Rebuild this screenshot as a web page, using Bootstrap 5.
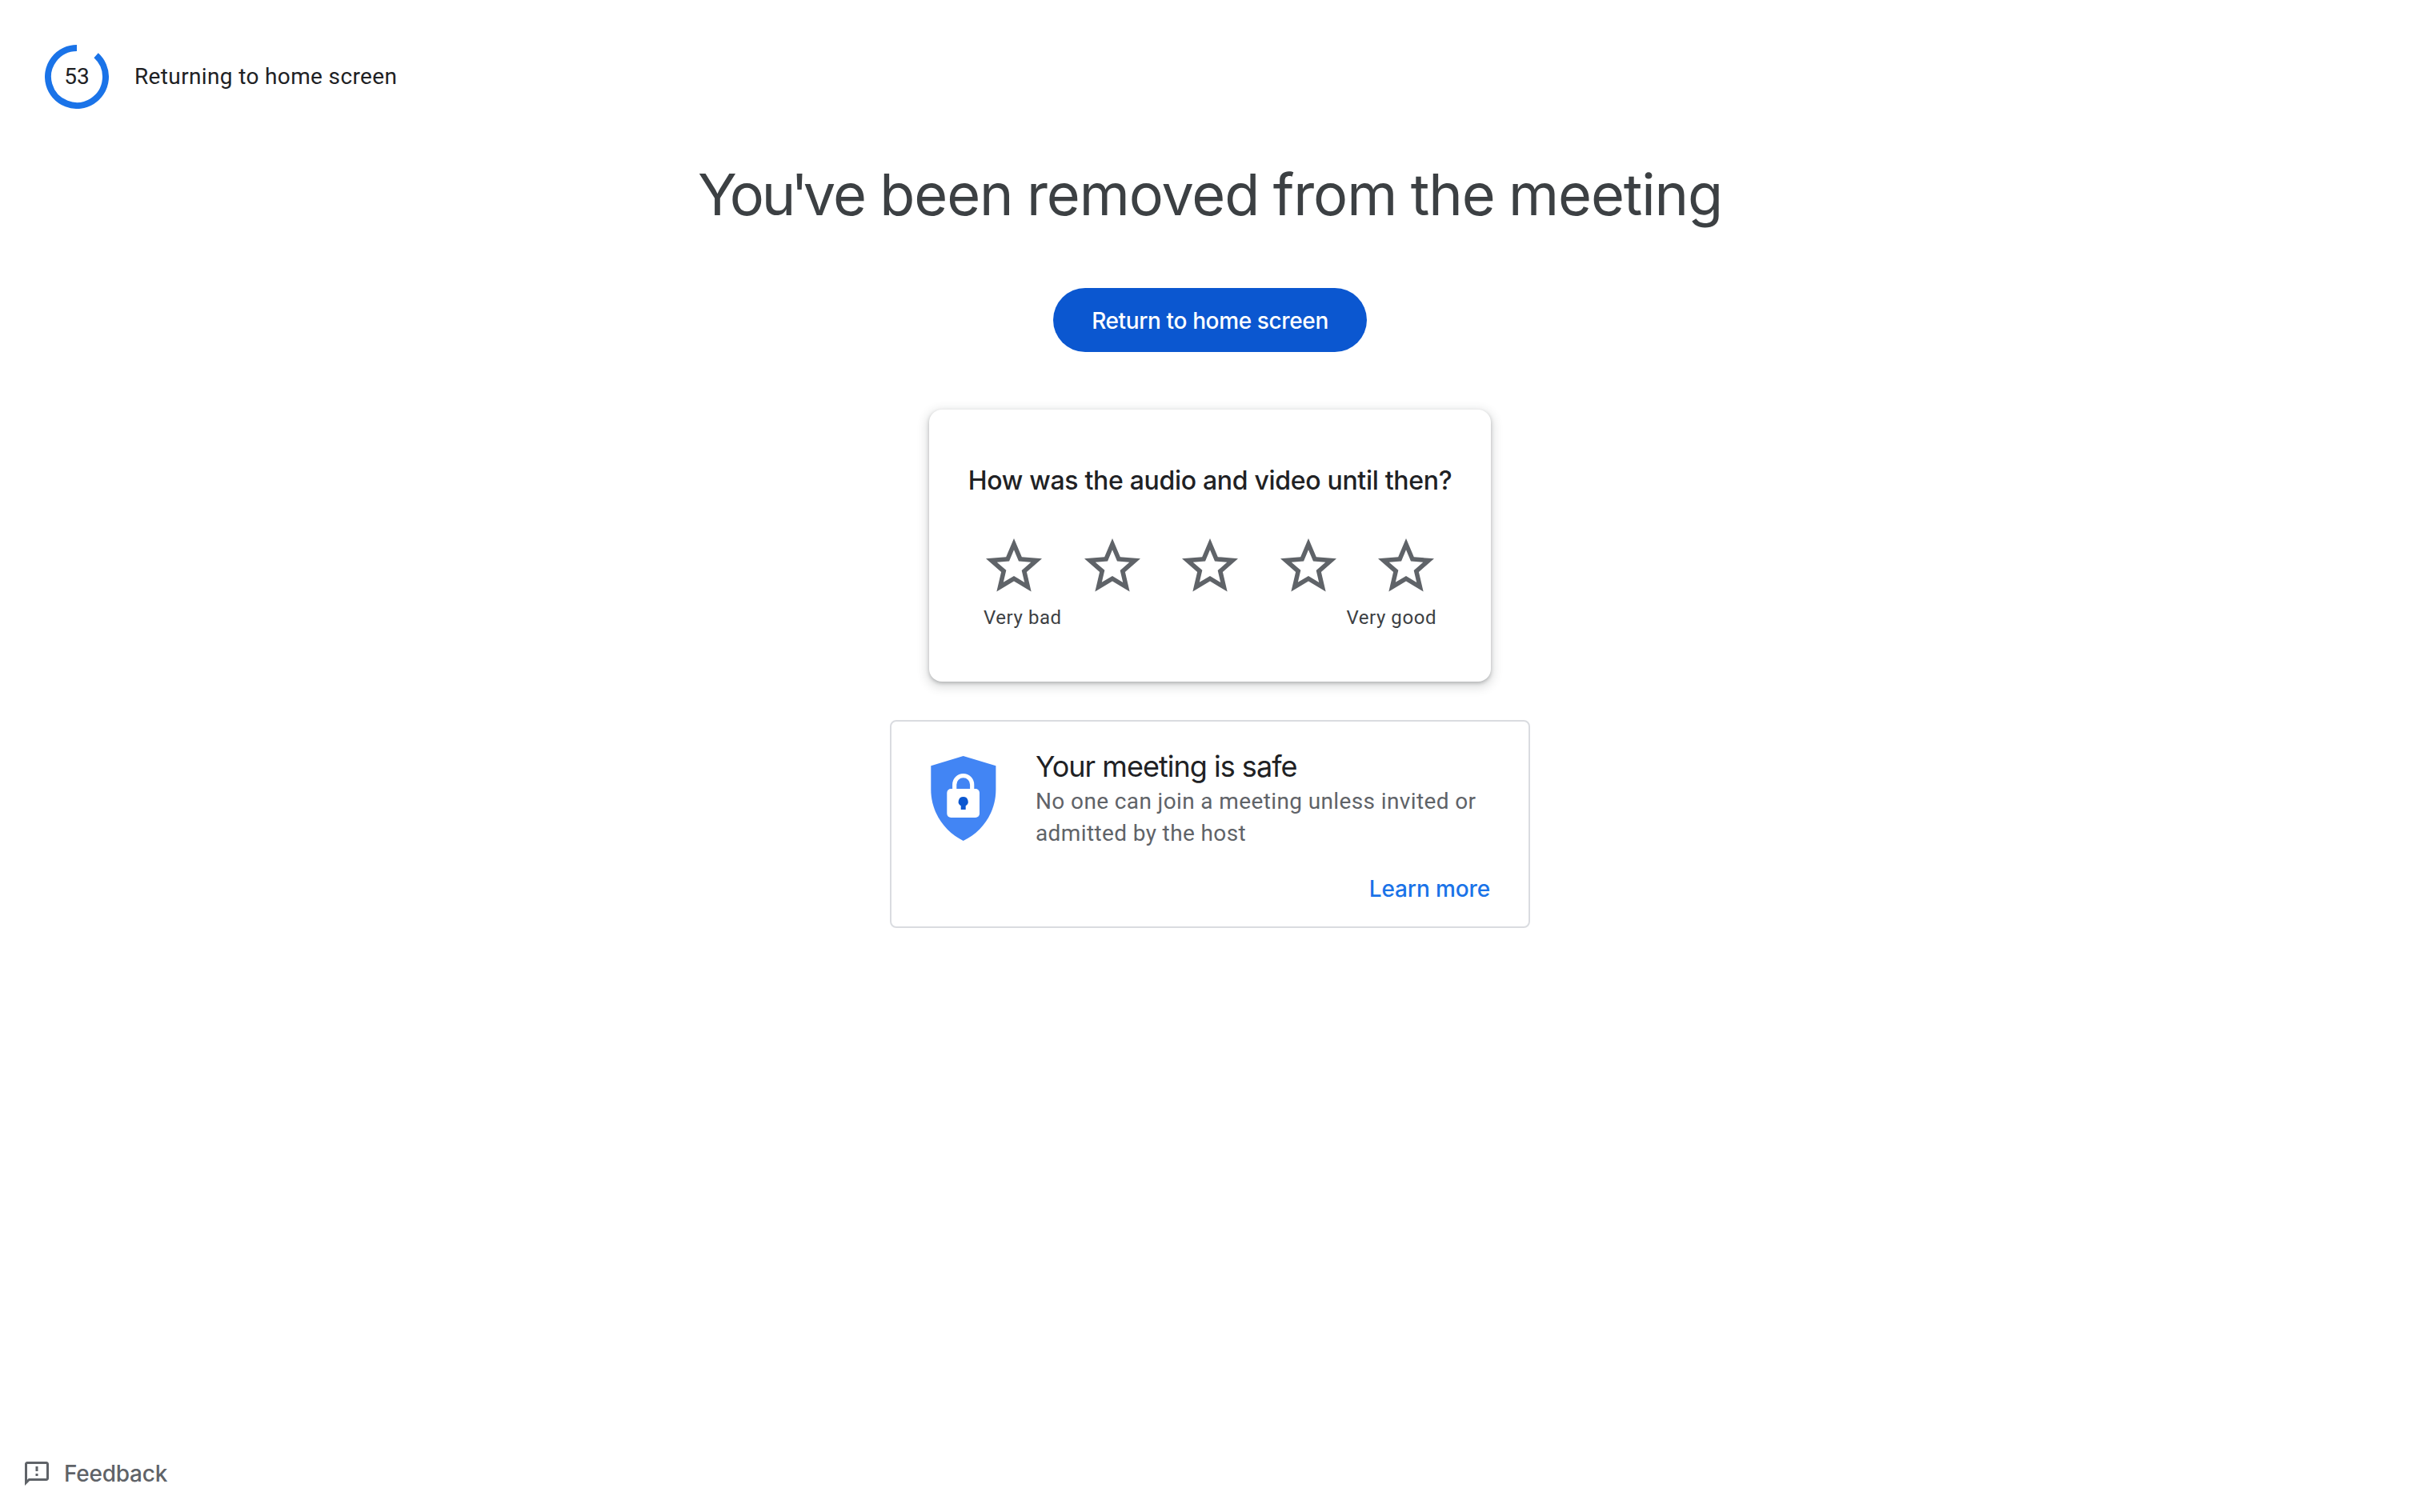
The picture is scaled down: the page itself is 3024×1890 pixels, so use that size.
<!DOCTYPE html>
<html lang="en">
<head>
<meta charset="utf-8">
<meta name="viewport" content="width=device-width, initial-scale=1">
<title>Meet</title>
<link href="https://cdn.jsdelivr.net/npm/bootstrap@5.3.0/dist/css/bootstrap.min.css" rel="stylesheet">
<style>
  body { font-family: Roboto, "Liberation Sans", sans-serif; font-size: 28px; color: #202124; background: #fff; }
  .display-face { font-family: Inter, "Liberation Sans", sans-serif; }
  svg { display: block; flex: none; }
  .top-bar { padding: 56px 56px 0; height: 199px; }
  .countdown { width: 80px; height: 80px; }
  .countdown-label { letter-spacing: .36px; line-height: 40px; }
  .top-row { gap: 32px; }
  .page-title { font-size: 72px; line-height: 88px; letter-spacing: -1.1px; word-spacing: -1.6px; color: #3c4043; font-weight: 400; margin-bottom: 73px; }
  .kern-a { letter-spacing: -3.400px; }
  .kern-b { letter-spacing: -6px; }
  .btn-home { width: 392px; height: 80px; background: #0b57d0; color: #fff; font-size: 28px; font-weight: 500; letter-spacing: -.37px; margin-bottom: 72px; padding: 1px 0 0; }
  .btn-home:hover { background: #0842a0; color: #fff; }
  .rating-card { width: 702px; height: 340px; padding-top: 69px; border: 0; border-radius: 16px; margin-bottom: 48px;
    box-shadow: 0 2px 4px rgba(60,64,67,.3), 0 4px 12px 4px rgba(60,64,67,.15); }
  .rating-title { font-size: 32px; line-height: 40px; font-weight: 500; letter-spacing: -.31px; margin-bottom: 45px; }
  .stars { gap: 38.5px; margin-bottom: 6px; color: #5f6368; }
  .rating-ends { padding: 0 68px 0 68px; font-size: 24px; line-height: 32px; letter-spacing: .56px; color: #3c4043; }
  .safe-card { width: 800px; height: 260px; border: 2px solid #dadce0; border-radius: 8px; padding: 34px 48px 0; }
  .safe-body { gap: 48px; }
  .shield { margin-top: 9px; }
  .safe-title { font-size: 36px; line-height: 44px; font-weight: 400; letter-spacing: -.98px; margin-bottom: 2px; }
  .safe-text { line-height: 40px; letter-spacing: .38px; color: #5f6368; }
  .safe-link { line-height: 40px; margin-top: 29px; font-weight: 500; letter-spacing: -.12px; color: #1a73e8; }
  .feedback { padding: 0 0 28px 28px; gap: 16px; color: #5f6368; font-weight: 500; line-height: 40px; letter-spacing: -.24px; }
</style>
</head>
<body>
<div class="d-flex flex-column vh-100">
  <header class="top-bar">
    <div class="top-row d-flex align-items-center">
      <div class="countdown position-relative d-flex align-items-center justify-content-center">
        <svg class="position-absolute top-0 start-0" width="80" height="80" viewBox="0 0 80 80" fill="none" stroke="#1a73e8" stroke-width="8"><path d="M64.09 13.25A36 36 0 1 1 40 4"/></svg>
        <span>53</span>
      </div>
      <span class="countdown-label">Returning to home screen</span>
    </div>
  </header>

  <main class="d-flex flex-column align-items-center flex-grow-1">
    <h1 class="page-title display-face"><span class="kern-a">Yo<span class="kern-b">u'</span>v</span>e been removed from the meeting</h1>
    <button type="button" class="btn btn-home display-face rounded-pill border-0">Return to home screen</button>

    <section class="card rating-card">
      <h2 class="rating-title display-face text-center">How was the audio and video until then?</h2>
      <svg width="0" height="0" class="position-absolute"><symbol id="star" viewBox="0 0 24 24"><path fill="currentColor" d="M22 9.24l-7.19-.62L12 2 9.19 8.63 2 9.24l5.46 4.73L5.82 21 12 17.27 18.18 21l-1.63-7.03L22 9.24zM12 15.4l-3.76 2.27 1-4.28-3.32-2.88 4.38-.38L12 6.1l1.71 4.04 4.38.38-3.32 2.88 1 4.28L12 15.4z"/></symbol></svg>
      <div class="stars d-flex justify-content-center">
        <svg width="84" height="84"><use href="#star"/></svg>
        <svg width="84" height="84"><use href="#star"/></svg>
        <svg width="84" height="84"><use href="#star"/></svg>
        <svg width="84" height="84"><use href="#star"/></svg>
        <svg width="84" height="84"><use href="#star"/></svg>
      </div>
      <div class="rating-ends d-flex justify-content-between"><span>Very bad</span><span>Very good</span></div>
    </section>

    <section class="card safe-card">
      <div class="safe-body d-flex align-items-start">
        <svg class="shield" width="84" height="106" viewBox="0 0 84 106">
          <path fill="#4285f4" d="M1.300 12.300L41.700 0l40.700 12.300V42C82.400 71 65 95 41.700 106 19 95 1.300 71 1.300 42z"/>
          <path fill="none" stroke="#fff" stroke-width="5.200" d="M30.700 42V35.700a11 11 0 0 1 22 0v6.300"/>
          <rect x="21.300" y="41" width="40.700" height="36" rx="5" fill="#fff"/>
          <path fill="#0b57d0" d="M41.700 51a6 6 0 0 0-3 11.200V67h6v-4.800A6 6 0 0 0 41.700 51z"/>
        </svg>
        <div>
          <h2 class="safe-title display-face">Your meeting is safe</h2>
          <p class="safe-text mb-0">No one can join a meeting unless invited or<br>admitted by the host</p>
        </div>
      </div>
      <a href="#" class="safe-link display-face align-self-end text-decoration-none">Learn more</a>
    </section>
  </main>

  <footer class="feedback display-face d-flex align-items-center">
    <svg width="36" height="36" viewBox="0 0 24 24" fill="currentColor"><path d="M20 2H4c-1.100 0-1.990.9-1.990 2L2 22l4-4h14c1.100 0 2-.9 2-2V4c0-1.100-.9-2-2-2zm0 14H5.170L4 17.170V4h16v12zM11 12h2v2h-2zm0-6h2v4h-2z"/></svg>
    <span>Feedback</span>
  </footer>
</div>
<script src="https://cdn.jsdelivr.net/npm/bootstrap@5.3.0/dist/js/bootstrap.bundle.min.js"></script>
</body>
</html>
